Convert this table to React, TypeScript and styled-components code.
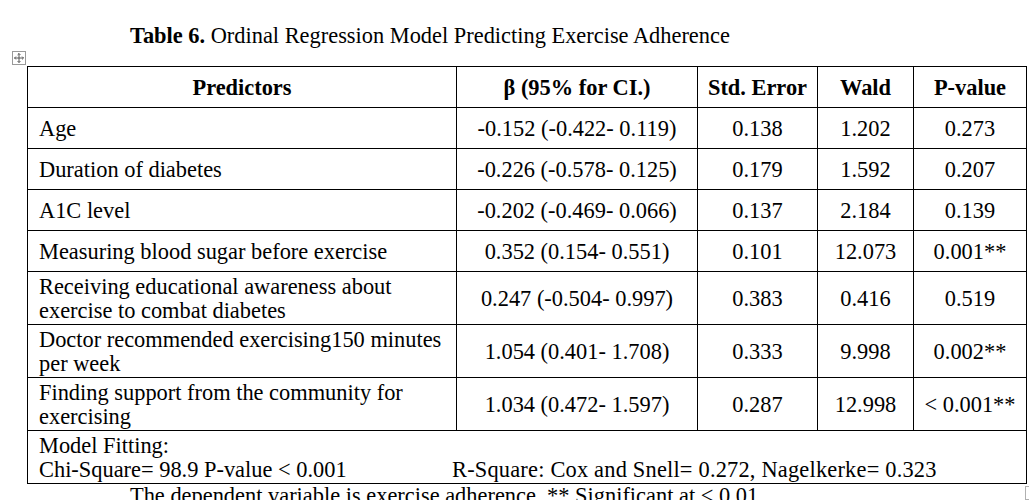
import React, { FC } from "react";
import styled, { createGlobalStyle } from "styled-components";

const GlobalStyle = createGlobalStyle`
  html, body {
    margin: 0;
    padding: 0;
    background: #ffffff;
  }
  body {
    font-family: "Liberation Serif", "Times New Roman", serif;
    color: #000000;
  }
`;

const Page = styled.div`
  width: 1029px;
  height: 500px;
  overflow: hidden;
  padding-top: 24px;
  box-sizing: border-box;
  font-size: 22.4px;
  line-height: 24px;
`;

const Caption = styled.div`
  margin-left: 130px;
  white-space: nowrap;
  b {
    font-weight: 700;
  }
`;

const TableWrap = styled.div`
  position: relative;
  margin: 18px 0 0 27px;
  width: 999px;
`;

const MoveHandle = styled.div`
  position: absolute;
  left: -15px;
  top: -15px;
  width: 12px;
  height: 12px;
  border: 1px solid #9a9a9a;
  background: #ffffff;
  display: flex;
  align-items: center;
  justify-content: center;
`;

const ResizeHandle = styled.div`
  position: absolute;
  left: 998px;
  bottom: -16px;
  width: 8px;
  height: 12px;
  border: 1px solid #b0b0b0;
  border-right: none;
  background: #ffffff;
`;

const Table = styled.table`
  width: 999px;
  table-layout: fixed;
  border-collapse: collapse;
`;

const Row = styled.tr<{ $tall?: boolean }>`
  height: ${(p) => (p.$tall ? "52px" : "41px")};
`;

const HeadCell = styled.th`
  border: 1px solid #000000;
  font-weight: 700;
  text-align: center;
  vertical-align: middle;
  padding: 3px 6px 1px;
  white-space: nowrap;
`;

const Cell = styled.td<{ $left?: boolean }>`
  border: 1px solid #000000;
  text-align: ${(p) => (p.$left ? "left" : "center")};
  vertical-align: middle;
  padding: 3px ${(p) => (p.$left ? "11px" : "4px")} 1px;
  white-space: ${(p) => (p.$left ? "normal" : "nowrap")};
`;

const FitLine = styled.div`
  display: flex;
  white-space: nowrap;
`;

const FitLeft = styled.span`
  width: 413px;
  flex: none;
`;

const FitRight = styled.span`
  letter-spacing: 0.2px;
`;

const Note = styled.div`
  margin-left: 130px;
  white-space: nowrap;
`;

const MoveIcon: FC = () => (
  <svg width="10" height="10" viewBox="0 0 10 10" fill="none" stroke="#555" strokeWidth="1">
    <path d="M5 0.5v9M0.5 5h9" />
    <path d="M3.6 1.9L5 0.5l1.4 1.4M3.6 8.1L5 9.5l1.4-1.4M1.9 3.6L0.5 5l1.4 1.4M8.1 3.6L9.5 5L8.1 6.4" />
  </svg>
);

type Predictor = {
  name: string;
  beta: string;
  se: string;
  wald: string;
  p: string;
  tall?: boolean;
};

const predictors: Predictor[] = [
  { name: "Age", beta: "-0.152 (-0.422- 0.119)", se: "0.138", wald: "1.202", p: "0.273" },
  { name: "Duration of diabetes", beta: "-0.226 (-0.578- 0.125)", se: "0.179", wald: "1.592", p: "0.207" },
  { name: "A1C level", beta: "-0.202 (-0.469- 0.066)", se: "0.137", wald: "2.184", p: "0.139" },
  { name: "Measuring blood sugar before exercise", beta: "0.352 (0.154- 0.551)", se: "0.101", wald: "12.073", p: "0.001**" },
  {
    name: "Receiving educational awareness about exercise to combat diabetes",
    beta: "0.247 (-0.504- 0.997)",
    se: "0.383",
    wald: "0.416",
    p: "0.519",
    tall: true,
  },
  {
    name: "Doctor recommended exercising150 minutes per week",
    beta: "1.054 (0.401- 1.708)",
    se: "0.333",
    wald: "9.998",
    p: "0.002**",
    tall: true,
  },
  {
    name: "Finding support from the community for exercising",
    beta: "1.034 (0.472- 1.597)",
    se: "0.287",
    wald: "12.998",
    p: "< 0.001**",
    tall: true,
  },
];

const App: FC = () => {
  return (
    <>
      <GlobalStyle />
      <Page>
        <Caption>
          <b>Table 6.</b> Ordinal Regression Model Predicting Exercise Adherence
        </Caption>
        <TableWrap>
          <MoveHandle>
            <MoveIcon />
          </MoveHandle>
          <Table>
            <colgroup>
              <col style={{ width: 429 }} />
              <col style={{ width: 241 }} />
              <col style={{ width: 120 }} />
              <col style={{ width: 96 }} />
              <col style={{ width: 113 }} />
            </colgroup>
            <thead>
              <Row>
                <HeadCell>Predictors</HeadCell>
                <HeadCell>β (95% for CI.)</HeadCell>
                <HeadCell>Std. Error</HeadCell>
                <HeadCell>Wald</HeadCell>
                <HeadCell>P-value</HeadCell>
              </Row>
            </thead>
            <tbody>
              {predictors.map((r) => (
                <Row key={r.name} $tall={r.tall}>
                  <Cell $left>{r.name}</Cell>
                  <Cell>{r.beta}</Cell>
                  <Cell>{r.se}</Cell>
                  <Cell>{r.wald}</Cell>
                  <Cell>{r.p}</Cell>
                </Row>
              ))}
              <Row $tall>
                <Cell $left colSpan={5}>
                  <div>Model Fitting:</div>
                  <FitLine>
                    <FitLeft>Chi-Square= 98.9 P-value &lt; 0.001</FitLeft>
                    <FitRight>R-Square: Cox and Snell= 0.272, Nagelkerke= 0.323</FitRight>
                  </FitLine>
                </Cell>
              </Row>
            </tbody>
          </Table>
          <ResizeHandle />
        </TableWrap>
        <Note>The dependent variable is exercise adherence. ** Significant at &lt; 0.01</Note>
      </Page>
    </>
  );
};

export default App;
